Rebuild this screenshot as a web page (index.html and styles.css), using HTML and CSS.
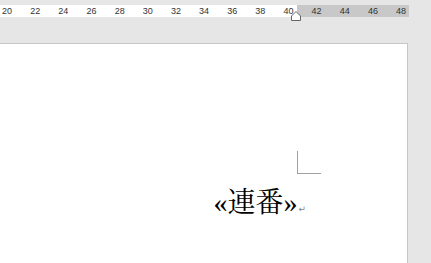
FILE: index.html
```
<!DOCTYPE html>
<html lang="ja">
<head>
    <meta charset="UTF-8">
    <title>差し込み文書</title>
    <link rel="stylesheet" href="styles.css">
</head>
<body>
    <div class="ruler">
        <div class="ruler-nums">
            <span>20</span><span>22</span><span>24</span><span>26</span><span>28</span>
            <span>30</span><span>32</span><span>34</span><span>36</span><span>38</span>
            <span>40</span><span>42</span><span>44</span><span>46</span><span>48</span>
        </div>
        <svg class="indent-marker" width="10" height="10" viewBox="0 0 10 10">
            <path d="M5 0.5 L9.5 5 L9.5 9.5 L0.5 9.5 L0.5 5 Z" fill="#fff" stroke="#666" stroke-width="1"/>
        </svg>
    </div>
    <div class="page">
        <div class="corner-mark"></div>
        <div class="field-line">
            <span class="field">«連番»</span><span class="return-mark">↵</span>
        </div>
    </div>
</body>
</html>
```

FILE: styles.css
```
body {
    margin: 0;
    background-color: #e6e6e6;
    font-family: "Liberation Sans", Arial, sans-serif;
    overflow: hidden;
}
.ruler {
    position: relative;
    margin-top: 5px;
    width: 409px;
    height: 12px;
    background: linear-gradient(to right, #fff 297px, #c8c8c8 297px);
}
.ruler-nums {
    display: flex;
    margin-left: -7px;
    line-height: 12px;
    font-size: 9px;
    color: #333;
}
.ruler-nums span {
    flex: 0 0 28.15px;
    text-align: center;
}
.indent-marker {
    position: absolute;
    left: 291px;
    top: 6px;
}
.page {
    margin-top: 26px;
    width: 408px;
    height: 220px;
    background-color: #fff;
    border-top: 1px solid #c6c6c6;
    border-right: 1px solid #c6c6c6;
    padding-top: 107px;
    box-sizing: border-box;
}
.corner-mark {
    margin-left: 297px;
    width: 23px;
    height: 22px;
    border-left: 1px solid #a0a0a0;
    border-bottom: 1px solid #a0a0a0;
}
.field-line {
    width: 306px;
    text-align: right;
    margin-top: 13px;
    line-height: 32px;
}
.field {
    font-family: "Liberation Serif", "Noto Serif CJK JP", "Noto Sans CJK JP", serif;
    font-size: 28px;
    color: #000;
}
.return-mark {
    font-family: "DejaVu Sans", sans-serif;
    font-size: 9px;
    color: #888;
    margin-left: 1px;
}
```
